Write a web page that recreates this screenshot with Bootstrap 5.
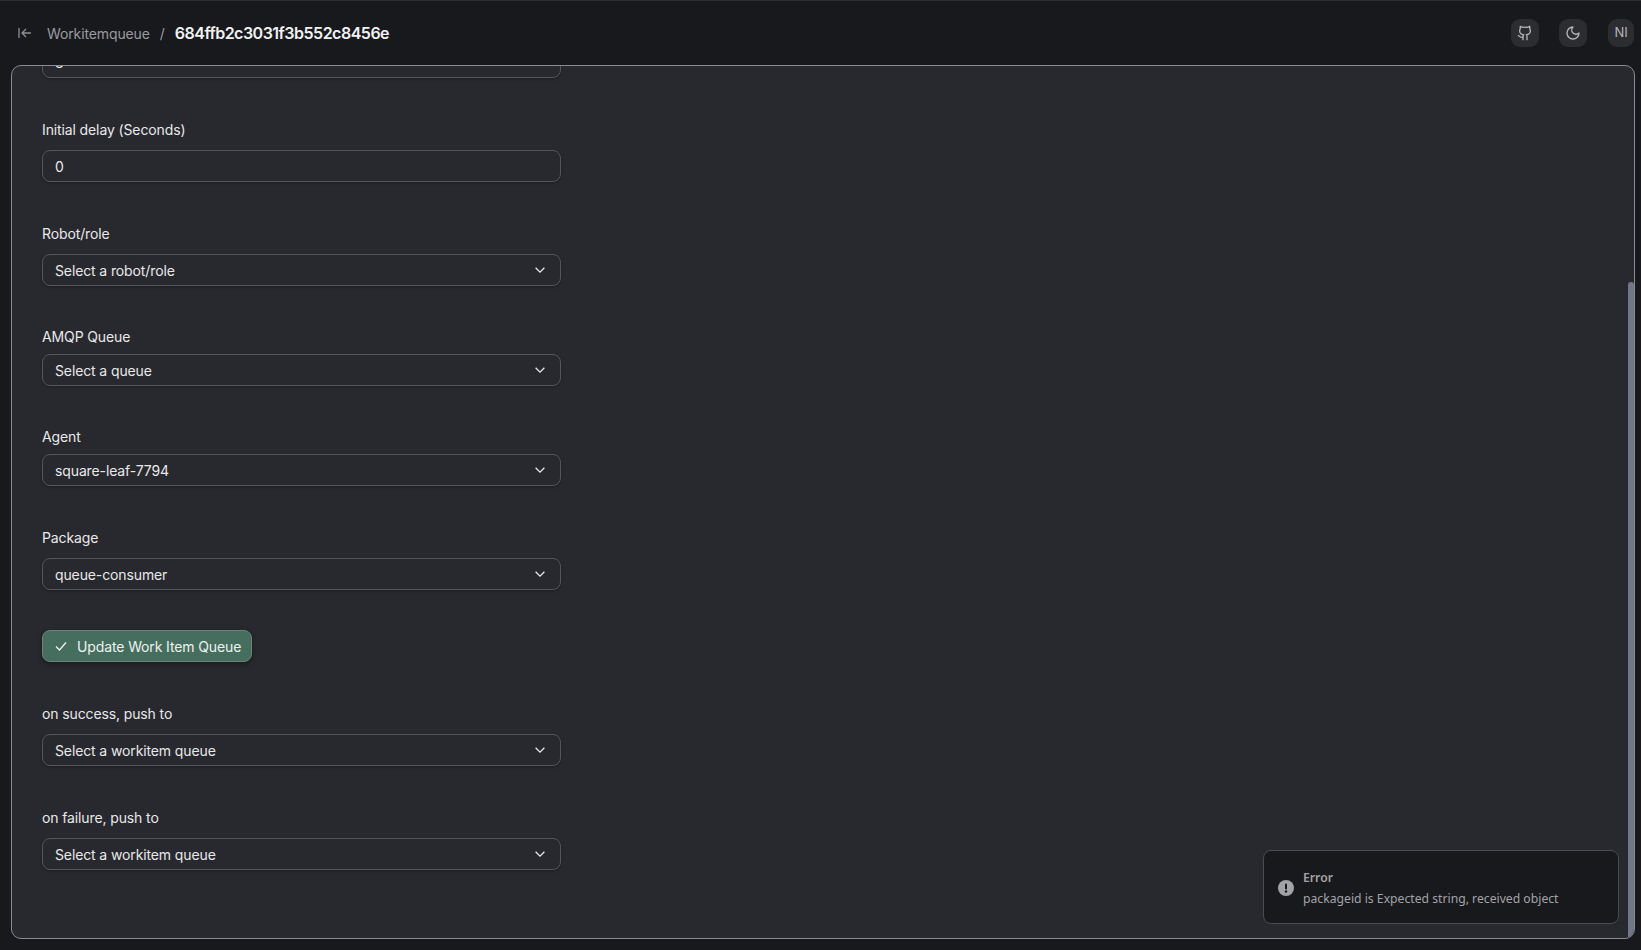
<!DOCTYPE html>
<html lang="en">
<head>
<meta charset="utf-8">
<title>Workitemqueue</title>
<link href="https://cdn.jsdelivr.net/npm/bootstrap@5.3.0/dist/css/bootstrap.min.css" rel="stylesheet">
<style>
html,body{height:100%}
body{background:#18191d;color:#e8e8ea;font-family:Inter,"Liberation Sans",sans-serif;font-size:14px;letter-spacing:-.12px;border-top:1px solid #2c2d31;overflow:hidden}
.topbar{height:64px;padding:0 7px 0 17px}
.crumb-muted{color:#9a9ba0}
.crumb-sep{margin:0 10px}
.crumb-back{margin-right:14px}
.crumb-id{color:#f2f2f3;font-weight:600;font-size:16px;letter-spacing:-.5px}
.back-ico{color:#8d8e93}
.round-btn{width:28px;height:28px;background:#2c2d31;border-radius:9px;color:#b5b6ba;font-size:13px}
.round-narrow{width:26px;margin-left:1px}
.gap-btns{gap:20px}
.panel{height:874px;margin:0 6px 0 11px;background:#28292e;border:1px solid #8a8b8f;border-radius:10px;overflow:hidden}
.scroll-inner{margin-top:-20px;padding-left:30px;width:549px}
.field{margin-bottom:42px}
.field-m41{margin-bottom:41px}
.field-m40{margin-bottom:40px}
.field label{display:block;color:#e8e8ea;font-size:14px;line-height:20px;margin-bottom:10px}
.field-tight label{margin-bottom:7px}
.field-box.form-control{height:32px;padding:0 13px 0 12px;background:#28292e;color:#e8e8ea;border:1px solid #55565b;border-radius:8px;font-size:14px;box-shadow:0 1px 3px rgba(0,0,0,.25)}
.update-btn.btn{height:32px;padding:0 10px;gap:8px;background:#466e5f;border:1px solid #6f7f79;border-radius:8px;color:#eef1ef;font-size:14px;letter-spacing:-.12px;box-shadow:0 2px 5px rgba(0,0,0,.35);margin-bottom:42px}
.scroll-thumb{top:216px;right:0;bottom:0;width:6px;background:#717786;border-radius:3px 3px 0 0}
.err-toast{right:15px;bottom:14px;width:356px;height:74px;gap:9px;background:#18191d;border:1px solid #4a4b50;border-radius:8px;padding:1px 14px 0;color:#a2a3a7;font-family:"Noto Sans","Liberation Sans",sans-serif;font-size:12.2px;line-height:21px;letter-spacing:0}
.err-title{font-weight:600}
</style>
</head>
<body>
<div class="d-flex flex-column">
<header class="topbar d-flex align-items-center justify-content-between">
 <nav class="d-flex align-items-center">
  <svg class="back-ico crumb-back" width="16" height="16" viewBox="0 0 16 16" fill="none" stroke="currentColor" stroke-width="1.3"><path d="M2 3v10M14 8H5M9 4 5 8l4 4"/></svg>
  <span class="crumb-muted">Workitemqueue</span>
  <span class="crumb-muted crumb-sep">/</span>
  <span class="crumb-id">684ffb2c3031f3b552c8456e</span>
 </nav>
 <div class="d-flex align-items-center gap-btns">
  <span class="round-btn d-flex align-items-center justify-content-center"><svg width="16" height="16" viewBox="0 0 24 24" fill="none" stroke="currentColor" stroke-width="2" stroke-linecap="round" stroke-linejoin="round"><path d="M15 22v-4a4.8 4.8 0 0 0-1-3.5c3 0 6-2 6-5.500.08-1.250-.27-2.480-1-3.500.28-1.150.28-2.350 0-3.500 0 0-1 0-3 1.500-2.640-.5-5.360-.5-8 0C6 2 5 2 5 2c-.3 1.150-.3 2.350 0 3.500A5.400 5.400 0 0 0 4 9c0 3.500 3 5.500 6 5.500-.39.49-.68 1.050-.85 1.650-.17.6-.22 1.230-.15 1.850v4"/><path d="M9 18c-4.510 2-5-2-7-2"/></svg></span>
  <span class="round-btn d-flex align-items-center justify-content-center"><svg width="16" height="16" viewBox="0 0 24 24" fill="none" stroke="currentColor" stroke-width="2" stroke-linecap="round" stroke-linejoin="round"><path d="M12 3a6 6 0 0 0 9 9 9 9 0 1 1-9-9Z"/></svg></span>
  <span class="round-btn round-narrow d-flex align-items-center justify-content-center">NI</span>
 </div>
</header>
<main class="panel position-relative">
 <div class="scroll-inner">
  <div class="field"><div class="field-box form-control d-flex align-items-center">3</div></div>
  <div class="field"><label>Initial delay (Seconds)</label><div class="field-box form-control d-flex align-items-center">0</div></div>
  <div class="field field-m41"><label>Robot/role</label><div class="field-box form-control d-flex align-items-center justify-content-between">Select a robot/role<svg width="14" height="14" viewBox="0 0 16 16" fill="none" stroke="currentColor" stroke-width="1.5"><path d="m3 5.500 5 5 5-5"/></svg></div></div>
  <div class="field field-tight field-m41"><label>AMQP Queue</label><div class="field-box form-control d-flex align-items-center justify-content-between">Select a queue<svg width="14" height="14" viewBox="0 0 16 16" fill="none" stroke="currentColor" stroke-width="1.5"><path d="m3 5.500 5 5 5-5"/></svg></div></div>
  <div class="field field-tight"><label>Agent</label><div class="field-box form-control d-flex align-items-center justify-content-between">square-leaf-7794<svg width="14" height="14" viewBox="0 0 16 16" fill="none" stroke="currentColor" stroke-width="1.5"><path d="m3 5.500 5 5 5-5"/></svg></div></div>
  <div class="field field-m40"><label>Package</label><div class="field-box form-control d-flex align-items-center justify-content-between">queue-consumer<svg width="14" height="14" viewBox="0 0 16 16" fill="none" stroke="currentColor" stroke-width="1.5"><path d="m3 5.500 5 5 5-5"/></svg></div></div>
  <button type="button" class="update-btn btn d-inline-flex align-items-center"><svg width="16" height="16" viewBox="0 0 16 16" fill="none" stroke="currentColor" stroke-width="1.3"><path d="m3 8.500 3.500 3.500L13 4.500"/></svg>Update Work Item Queue</button>
  <div class="field"><label>on success, push to</label><div class="field-box form-control d-flex align-items-center justify-content-between">Select a workitem queue<svg width="14" height="14" viewBox="0 0 16 16" fill="none" stroke="currentColor" stroke-width="1.5"><path d="m3 5.500 5 5 5-5"/></svg></div></div>
  <div class="field"><label>on failure, push to</label><div class="field-box form-control d-flex align-items-center justify-content-between">Select a workitem queue<svg width="14" height="14" viewBox="0 0 16 16" fill="none" stroke="currentColor" stroke-width="1.5"><path d="m3 5.500 5 5 5-5"/></svg></div></div>
 </div>
 <div class="scroll-thumb position-absolute"></div>
 <div class="err-toast position-absolute d-flex align-items-center">
  <svg width="16" height="16" viewBox="0 0 16 16"><circle cx="8" cy="8" r="8" fill="#a2a3a7"/><rect x="7" y="3.500" width="2" height="6" rx="1" fill="#18191d"/><circle cx="8" cy="11.500" r="1.200" fill="#18191d"/></svg>
  <div><div class="err-title">Error</div><div>packageid is Expected string, received object</div></div>
 </div>
</main>
</div>
<script src="https://cdn.jsdelivr.net/npm/bootstrap@5.3.0/dist/js/bootstrap.bundle.min.js"></script>
</body>
</html>
